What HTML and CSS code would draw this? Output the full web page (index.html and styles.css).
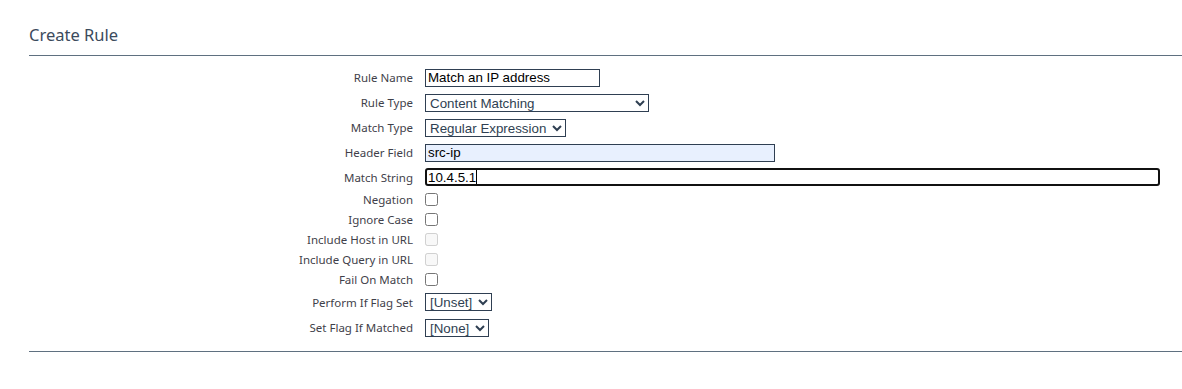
FILE: index.html
```html
<!DOCTYPE html>
<html lang="en">
<head>
    <meta charset="UTF-8">
    <meta name="viewport" content="width=device-width, initial-scale=1.0">
    <title>Create Rule</title>
    <link rel="stylesheet" href="styles.css">
</head>
<body>

    <div class="panel">
        <h2 class="panel-title">Create Rule</h2>

        <form class="rule-form">
            <div class="row">
                <label for="rule-name">Rule Name</label>
                <input type="text" id="rule-name" class="field name-field" value="Match an IP address">
            </div>

            <div class="row">
                <label for="rule-type">Rule Type</label>
                <select id="rule-type" class="field type-select">
                    <option>Content Matching</option>
                </select>
            </div>

            <div class="row">
                <label for="match-type">Match Type</label>
                <select id="match-type" class="field">
                    <option>Regular Expression</option>
                </select>
            </div>

            <div class="row">
                <label for="header-field">Header Field</label>
                <input type="text" id="header-field" class="field header-field" value="src-ip">
            </div>

            <div class="row row-string">
                <label for="match-string">Match String</label>
                <div class="field string-field">
                    <span>10.4.5.1</span><span class="caret"></span>
                </div>
            </div>

            <div class="row row-check">
                <label for="negation">Negation</label>
                <input type="checkbox" id="negation">
            </div>

            <div class="row row-check">
                <label for="ignore-case">Ignore Case</label>
                <input type="checkbox" id="ignore-case">
            </div>

            <div class="row row-check">
                <label for="include-host">Include Host in URL</label>
                <input type="checkbox" id="include-host" disabled>
            </div>

            <div class="row row-check">
                <label for="include-query">Include Query in URL</label>
                <input type="checkbox" id="include-query" disabled>
            </div>

            <div class="row row-check">
                <label for="fail-match">Fail On Match</label>
                <input type="checkbox" id="fail-match">
            </div>

            <div class="row row-flag">
                <label for="perform-flag">Perform If Flag Set</label>
                <select id="perform-flag" class="field">
                    <option>[Unset]</option>
                </select>
            </div>

            <div class="row">
                <label for="set-flag">Set Flag If Matched</label>
                <select id="set-flag" class="field">
                    <option>[None]</option>
                </select>
            </div>
        </form>
    </div>

</body>
</html>
```

FILE: styles.css
```css
* {
    margin: 0;
    padding: 0;
    box-sizing: border-box;
}

body {
    background: #fff;
    font-family: 'Noto Sans', sans-serif;
    color: #3d3d3d;
}

.panel {
    margin-left: 29px;
    padding-top: 24px;
}

.panel-title {
    font-size: 16.5px;
    font-weight: normal;
    color: #3b4a5c;
    line-height: 21px;
    padding-bottom: 10px;
    border-bottom: 1px solid #5f7080;
}

.rule-form {
    padding-top: 9px;
    padding-bottom: 11px;
    border-bottom: 1px solid #5f7080;
}

.row {
    display: flex;
    align-items: center;
    height: 25px;
}

.row-string {
    height: 24px;
}

.row-check {
    height: 20px;
}

.row-flag {
    height: 26px;
}

.row label {
    width: 384px;
    margin-right: 12px;
    text-align: right;
    font-size: 11.5px;
    color: #3f3f4a;
}

.field {
    height: 18px;
    border: 1px solid #2f3f52;
    border-radius: 0;
    background: #fff;
    font-family: 'Liberation Sans', Arial, sans-serif;
    font-size: 13.33px;
    color: #000;
    padding: 0 2px;
    outline: none;
}

select.field {
    color: #2f3f52;
    padding: 0 2px 0 0;
}

.name-field {
    width: 175px;
}

.type-select {
    width: 224px;
}

.header-field {
    width: 350px;
    background: #e8f0fe;
}

.string-field {
    display: flex;
    align-items: center;
    width: 735px;
    border: 2px solid #111;
    border-radius: 3px;
    padding: 0 1px;
}

.caret {
    width: 1px;
    height: 14px;
    background: #000;
}

.row input[type="checkbox"] {
    width: 13px;
    height: 13px;
    margin: 0;
}
```
